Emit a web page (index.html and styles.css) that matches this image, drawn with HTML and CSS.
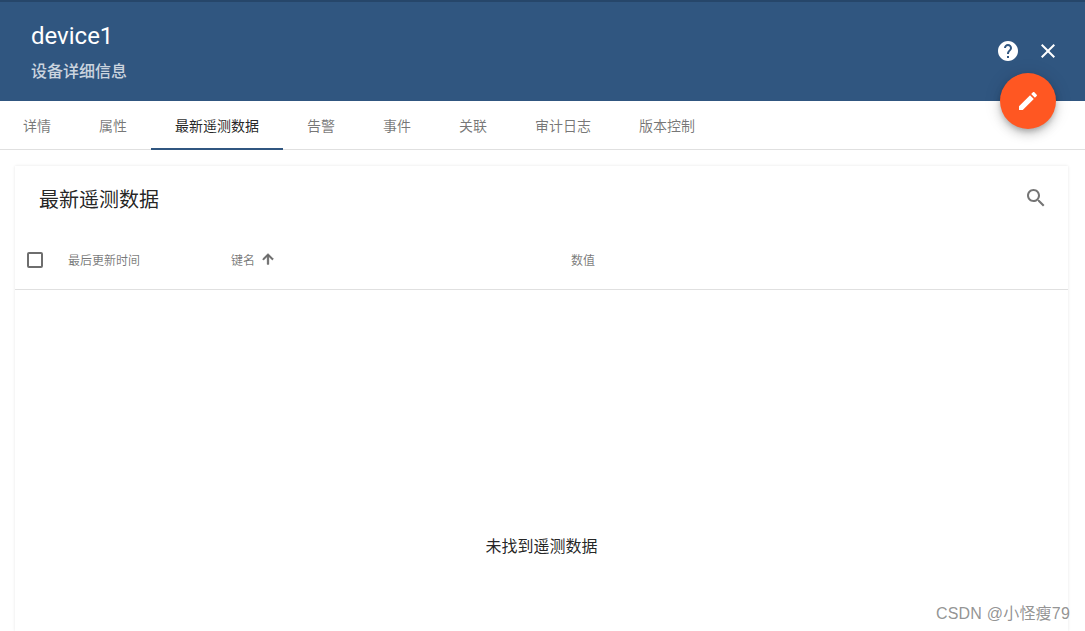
FILE: index.html
```html
<!DOCTYPE html>
<html lang="zh">
<head>
<meta charset="utf-8">
<title>device1</title>
<link rel="stylesheet" href="styles.css">
</head>
<body>
<header class="head">
  <div class="head-text">
    <h1 class="device">device1</h1>
    <div class="subtitle">设备详细信息</div>
  </div>
  <div class="head-actions">
    <svg class="icon" viewBox="0 0 24 24"><path fill="#fff" d="M12 2C6.48 2 2 6.48 2 12s4.48 10 10 10 10-4.48 10-10S17.52 2 12 2zm1 17h-2v-2h2v2zm2.07-7.75l-.9.92C13.45 12.9 13 13.5 13 15h-2v-.5c0-1.1.45-2.1 1.17-2.83l1.24-1.26c.37-.36.59-.86.59-1.41 0-1.1-.9-2-2-2s-2 .9-2 2H8c0-2.21 1.79-4 4-4s4 1.79 4 4c0 .88-.36 1.68-.93 2.25z"/></svg>
    <svg class="icon" viewBox="0 0 24 24"><path fill="#fff" d="M19 6.41L17.59 5 12 10.59 6.41 5 5 6.41 10.59 12 5 17.59 6.41 19 12 13.41 17.59 19 19 17.59 13.41 12z"/></svg>
  </div>
  <button class="fab" type="button">
    <svg class="icon" viewBox="0 0 24 24"><path fill="#fff" d="M3 17.25V21h3.75L17.81 9.94l-3.75-3.75L3 17.25zM20.71 7.04c.39-.39.39-1.02 0-1.41l-2.34-2.34c-.39-.39-1.02-.39-1.41 0l-1.83 1.83 3.75 3.75 1.83-1.83z"/></svg>
  </button>
</header>
<nav class="tabs">
  <span class="tab">详情</span>
  <span class="tab">属性</span>
  <span class="tab active">最新遥测数据</span>
  <span class="tab">告警</span>
  <span class="tab">事件</span>
  <span class="tab">关联</span>
  <span class="tab">审计日志</span>
  <span class="tab">版本控制</span>
</nav>
<main class="content">
  <section class="card">
    <div class="card-bar">
      <h2 class="card-title">最新遥测数据</h2>
      <svg class="icon search" viewBox="0 0 24 24"><path fill="#757575" d="M15.5 14h-.79l-.28-.27C15.41 12.59 16 11.11 16 9.5 16 5.91 13.09 3 9.5 3S3 5.91 3 9.5 5.91 16 9.5 16c1.61 0 3.09-.59 4.23-1.57l.27.28v.79l5 4.99L20.49 19l-4.99-5zm-6 0C7.01 14 5 11.99 5 9.5S7.01 5 9.5 5 14 7.01 14 9.5 11.99 14 9.5 14z"/></svg>
    </div>
    <div class="table-head">
      <span class="checkbox"></span>
      <span class="col col-time">最后更新时间</span>
      <span class="col col-key">键名<svg class="arrow" viewBox="0 0 24 24"><path fill="#666" d="M4 12l1.41 1.41L11 7.83V20h2V7.83l5.58 5.59L20 12l-8-8-8 8z" stroke="#666" stroke-width="1.2"/></svg></span>
      <span class="col">数值</span>
    </div>
    <div class="empty">未找到遥测数据</div>
  </section>
</main>
<div class="watermark">CSDN @小怪瘦79</div>
</body>
</html>
```
FILE: styles.css
```css
* { box-sizing: border-box; }
html, body { height: 100%; }
body {
  margin: 0;
  height: 631px;
  overflow: hidden;
  background: #fff;
  font-family: Roboto, "Noto Sans CJK SC", "Liberation Sans", sans-serif;
  color: #212121;
  position: relative;
}
.head {
  position: relative;
  height: 101px;
  background: #305680;
  border-top: 2px solid #26466a;
  display: flex;
  justify-content: space-between;
  padding: 18px 25px 0 31px;
}
.device {
  margin: 0;
  font-size: 24px;
  line-height: 32px;
  font-weight: 400;
  color: #fff;
}
.subtitle {
  margin-top: 10px;
  font-size: 16px;
  line-height: 20px;
  font-weight: 500;
  color: rgba(255, 255, 255, 0.75);
}
.head-actions {
  display: flex;
  gap: 16px;
  padding: 19px 0 0 0;
}
.icon { width: 24px; height: 24px; display: block; flex: none; }
.fab {
  position: absolute;
  top: 71px;
  right: 29px;
  width: 56px;
  height: 56px;
  border: 0;
  border-radius: 50%;
  background: #ff5722;
  display: flex;
  align-items: center;
  justify-content: center;
  padding: 0;
  box-shadow: 0 3px 5px -1px rgba(0,0,0,.2), 0 6px 10px 0 rgba(0,0,0,.14), 0 1px 18px 0 rgba(0,0,0,.12);
  z-index: 2;
}
.tabs {
  height: 49px;
  display: flex;
  margin-left: -1px;
  border-bottom: 1px solid #e0e0e0;
}
.tab {
  padding: 0 24px;
  font-size: 14px;
  line-height: 50px;
  font-weight: 400;
  color: rgba(0, 0, 0, 0.54);
  height: 49px;
  border-bottom: 2px solid transparent;
}
.tab.active {
  color: rgba(0, 0, 0, 0.87);
  border-bottom-color: #305680;
}
.content { padding: 16px 17px 0 15px; }
.card {
  background: #fff;
  height: 465px;
  box-shadow: 0 0 3px rgba(0, 0, 0, 0.1);
  clip-path: inset(-4px -4px 0 -4px);
}
.card-bar {
  height: 64px;
  padding: 3px 20px 0 24px;
  display: flex;
  align-items: center;
  justify-content: space-between;
}
.card-title {
  margin: 0;
  font-size: 20px;
  line-height: 28px;
  font-weight: 400;
  color: rgba(0, 0, 0, 0.87);
}
.search { margin-top: -3px; }
.table-head {
  height: 60px;
  padding-top: 1px;
  display: flex;
  align-items: center;
  border-bottom: 1px solid #e0e0e0;
  font-size: 12px;
  color: rgba(0, 0, 0, 0.54);
  font-weight: 400;
}
.checkbox {
  width: 16px;
  height: 16px;
  margin-left: 12px;
  margin-right: 25px;
  border: 2px solid #6e6e6e;
  border-radius: 2px;
}
.col { display: flex; align-items: center; gap: 5px; margin-top: -2px; }
.col-time { width: 163px; }
.col-key { width: 340px; }
.arrow { width: 16px; height: 16px; display: block; }
.empty {
  height: 269px;
  display: flex;
  align-items: flex-end;
  justify-content: center;
  font-size: 16px;
  line-height: 24px;
  color: rgba(0, 0, 0, 0.87);
}
.watermark {
  position: absolute;
  right: 15px;
  bottom: 6px;
  font-family: "Liberation Sans", "Noto Sans CJK SC", sans-serif;
  font-size: 16px;
  letter-spacing: 0.2px;
  line-height: 22px;
  color: rgba(120, 120, 120, 0.8);
  z-index: 3;
}
```
